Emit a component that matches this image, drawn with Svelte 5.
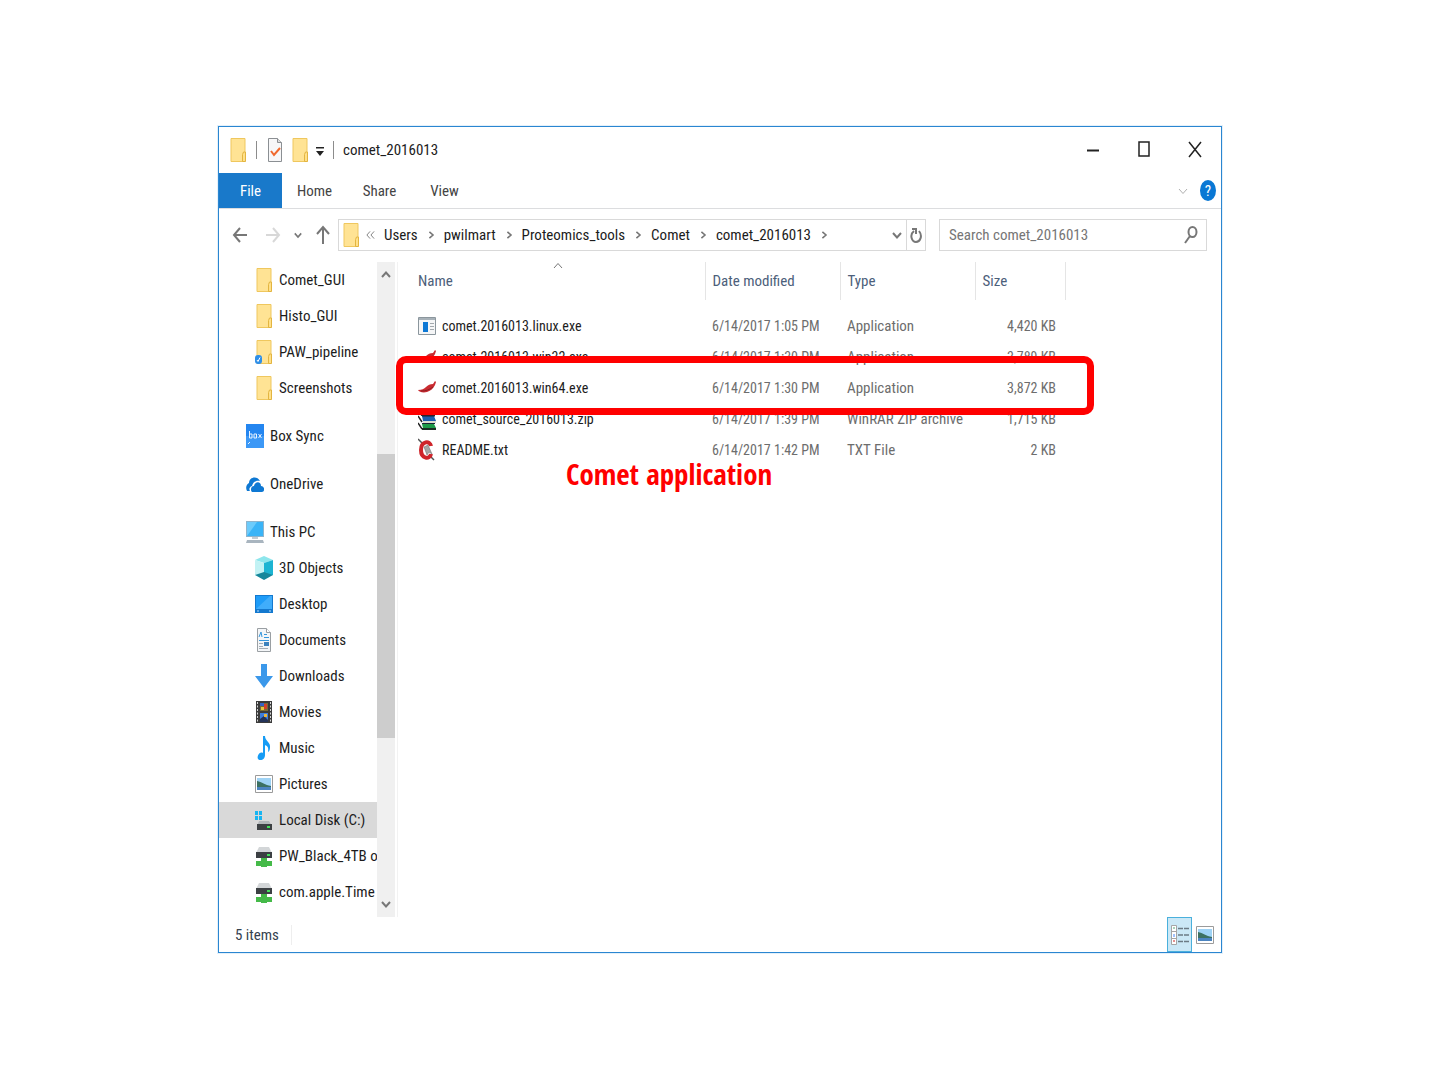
<script>
  const crumbs = ['Users', 'pwilmart', 'Proteomics_tools', 'Comet', 'comet_2016013'];

  const groups = [
    [
      { label: 'Comet_GUI', icon: 'folder', child: true },
      { label: 'Histo_GUI', icon: 'folder', child: true },
      { label: 'PAW_pipeline', icon: 'synced', child: true },
      { label: 'Screenshots', icon: 'folder', child: true }
    ],
    [{ label: 'Box Sync', icon: 'box' }],
    [{ label: 'OneDrive', icon: 'cloud' }],
    [
      { label: 'This PC', icon: 'pc' },
      { label: '3D Objects', icon: 'cube', child: true },
      { label: 'Desktop', icon: 'desktop', child: true },
      { label: 'Documents', icon: 'document', child: true },
      { label: 'Downloads', icon: 'download', child: true },
      { label: 'Movies', icon: 'movie', child: true },
      { label: 'Music', icon: 'music', child: true },
      { label: 'Pictures', icon: 'picture', child: true },
      { label: 'Local Disk (C:)', icon: 'disk', child: true, selected: true },
      { label: 'PW_Black_4TB o', icon: 'netdisk', child: true },
      { label: 'com.apple.Time', icon: 'netdisk', child: true }
    ]
  ];

  const files = [
    { name: 'comet.2016013.linux.exe', icon: 'exe', date: '6/14/2017 1:05 PM', type: 'Application', size: '4,420 KB' },
    { name: 'comet.2016013.win32.exe', icon: 'pepper', date: '6/14/2017 1:30 PM', type: 'Application', size: '3,789 KB' },
    { name: 'comet.2016013.win64.exe', icon: 'pepper', date: '6/14/2017 1:30 PM', type: 'Application', size: '3,872 KB' },
    { name: 'comet_source_2016013.zip', icon: 'rar', date: '6/14/2017 1:39 PM', type: 'WinRAR ZIP archive', size: '1,715 KB' },
    { name: 'README.txt', icon: 'txt', date: '6/14/2017 1:42 PM', type: 'TXT File', size: '2 KB' }
  ];
</script>

{#snippet icon(kind)}
  <svg class="icon" viewBox="0 0 18 24" aria-hidden="true">
    {#if kind === 'folder' || kind === 'synced'}
      <path d="M2 .5h14v23H2z" fill="#ffe394" stroke="#efc75e" />
      <path d="M14.500 14h2v9.500h-3v-7z" fill="#ffe08a" stroke="#e3b540" />
      {#if kind === 'synced'}
        <rect x="0" y="15" width="7" height="9" rx="3" fill="#2f8fe8" />
        <path d="M2 20l1 1.500 2-4" fill="none" stroke="#fff" />
      {/if}
    {:else if kind === 'box'}
      <rect width="18" height="24" fill="#2486f0" />
      <path d="M0 12h18v12H0z" fill="#3c98f6" />
      <path d="M3.500 7v7h2.500v-4H3.500M8 10h2.500v4H8zM12.500 10l3 4m0-4l-3 4M2 20l2-2" fill="none" stroke="#e8f3ff" />
    {:else if kind === 'cloud'}
      <path d="M1 19c-2-4 0-7 2-8 0-6 8-8 11-2-4-1-7 1-8 5-3 1-3 4-2 5z" fill="#0e78d3" />
      <path d="M6 20c-2-2-1-6 2-6 1-5 7-5 7 0 4 0 4 6 1 6z" fill="#0e78d3" />
    {:else if kind === 'pc'}
      <path d="M0 1h18v16H0z" fill="#8fb4cc" />
      <path d="M1 2h16v14H1z" fill="#3ab4f7" />
      <path d="M1 16L11 2H1z" fill="#6ccbfb" />
      <path d="M6 17h6v2H6z" fill="#c3ccd3" />
      <path d="M1 20h16l1 3H0z" fill="#a9b5bf" />
    {:else if kind === 'cube'}
      <path d="M0 4l9-4 9 4-9 3z" fill="#8ee6ec" />
      <path d="M0 4l9 3v13l-9-1z" fill="#c2f2f4" />
      <path d="M9 7l9-3v15l-9 1z" fill="#1cb4d2" />
      <path d="M0 19l9-3 9 3-9 5z" fill="#16879b" />
    {:else if kind === 'desktop'}
      <path d="M0 3h18v18H0z" fill="#1479cf" />
      <path d="M1 4h16v13H1z" fill="#1e9cf8" />
      <path d="M1 17L15 4h2v13z" fill="#40adfb" />
      <path d="M2 19h2m10 0h2" stroke="#b9defa" />
    {:else if kind === 'document'}
      <path d="M2.500 .5h9l4 4v19h-13z" fill="#f4f6f8" stroke="#9a9fa3" />
      <path d="M11.500 .5v4h4" fill="#fff" stroke="#9a9fa3" />
      <path d="M4 9l2-5 1 5M9 6.500h3M9 9.500h5M4 12.500h10" fill="none" stroke="#3596dc" />
      <path d="M4 15.500h4M4 18.500h4M4 20.500h9" stroke="#a4aeb6" />
      <path d="M9 14h5v4H9z" fill="#3c82bd" />
    {:else if kind === 'download'}
      <path d="M6 0h6v12h6l-9 12-9-12h6z" fill="#3b98ea" />
    {:else if kind === 'movie'}
      <path d="M1 1h16v22H1z" fill="#3b3b3b" />
      <path d="M2.500 2v20M15.500 2v20" stroke="#d7d7d7" stroke-dasharray="2 1.500" />
      <path d="M5 3h8v8H5z" fill="#7a6b35" />
      <path d="M5 13h8v9H5z" fill="#3d7ede" />
      <path d="M5 3h4v3H5z" fill="#3663c4" />
      <path d="M9 4h3v5H9z" fill="#d33e2c" />
      <path d="M6 7h3v3H6z" fill="#e4c440" />
      <path d="M5 19l4-3 4 4v2H5z" fill="#24345a" />
      <path d="M9 14h3v3H9z" fill="#e9b53c" />
    {:else if kind === 'music'}
      <path d="M8 0h2c0 5 6 6 5 12 0 3-2 4-2 4 1-5-1-6-3-7v10c0 3-2 5-4.500 5S2 22 3 19.500 6 16 8 17z" fill="#169cf5" />
    {:else if kind === 'picture'}
      <path d="M.5 3.500h17v17H.5z" fill="#fff" stroke="#9b9b9b" />
      <path d="M2 6h14v12H2z" fill="#9fd3f5" />
      <path d="M2 9c5 1 8 4 14 5v2H2z" fill="#3c7162" />
      <path d="M2 15h14v3H2z" fill="#4c84c0" />
    {:else if kind === 'disk'}
      <path d="M0 3h3v4H0zM4 3h3v4H4zM0 8h3v4H0zM4 8h3v4H4z" fill="#18b5f2" />
      <path d="M4 13h10l3 5H2z" fill="#b4b8bb" />
      <path d="M2 16h15v6H2z" fill="#3c4043" />
      <path d="M12 19h3" stroke="#42e05a" stroke-width="2" />
    {:else if kind === 'netdisk'}
      <path d="M4 3h10l3 6H1z" fill="#d3d6d8" />
      <path d="M1 8h16v6H1z" fill="#3c4043" />
      <path d="M12 11h3" stroke="#42e05a" stroke-width="2" />
      <path d="M6 14h6v3h5v5h-5v1H6v-1H1v-5h5z" fill="#45ba49" />
    {:else if kind === 'exe'}
      <path d="M.5 3.500h17v17H.5z" fill="#f5f6f7" stroke="#8b969d" />
      <path d="M1 4h16v2H1z" fill="#a7b1b8" />
      <path d="M5 8h5v10H5z" fill="#0d78d5" />
      <path d="M12 9.500h4M12 12.500h4M12 15.500h4" stroke="#a2a8ad" />
    {:else if kind === 'pepper'}
      <path d="M0 14c4 0 6-1 8-3 2-2 4-3 7-3l2-3 1 1-1 3c-2 4-5 6-8 7-4 1-8 0-9-2z" fill="#c92b30" />
      <path d="M3 15c5 0 8-1 12-4" fill="none" stroke="#8d1c22" />
    {:else if kind === 'rar'}
      <path d="M1 1h14l2 5H3z" fill="#7c2431" />
      <path d="M3 5h14v4H3z" fill="#4b1822" />
      <path d="M4 9h12l2 5H5z" fill="#1c5fae" />
      <path d="M5 14h13v2H5z" fill="#dcdccf" />
      <path d="M4 9h13M4 16.500h13" stroke="#1b2430" />
      <path d="M4 17h12l2 4H5z" fill="#1d9a47" />
      <path d="M4 21h14v2H4z" fill="#1b2d22" />
      <path d="M7 1h4v5H7z" fill="#a8893d" />
      <path d="M0 9l4 6m-4 1l4 6M1 2l2 6" fill="none" stroke="#222" stroke-width="1.500" />
    {:else if kind === 'txt'}
      <path d="M0 1l5 5m7 12l4 4" stroke="#555" stroke-width="1.500" />
      <path d="M13 8c-1-6-10-5-10 4s9 10 10 4" fill="none" stroke="#cf252b" stroke-width="4" />
      <path d="M6 9l4-2 4 9-3-2-2 3z" fill="#a6a6a6" stroke="#666" stroke-width=".5" />
    {/if}
  </svg>
{/snippet}

{#snippet chevron(dir)}
  <svg class="chevron {dir}" viewBox="0 0 10 10" aria-hidden="true"><path d="M1 3l4 4.500 4-4.500" /></svg>
{/snippet}

<main>
  <section class="window" aria-label="comet_2016013">
    <header class="titlebar">
      {@render icon('folder')}
      <span class="rule"></span>
      <button class="plain" aria-label="Properties">
        <svg class="icon" viewBox="0 0 18 24" aria-hidden="true">
          <path d="M2.500 .5h9l4 4v19h-13z" fill="#f7f7f8" stroke="#8b8f93" />
          <path d="M11.500 .5v4h4" fill="#ddd" stroke="#8b8f93" />
          <path d="M5 13l3 4 6-7" fill="none" stroke="#f0692e" stroke-width="2" />
        </svg>
      </button>
      <button class="plain" aria-label="New folder">{@render icon('folder')}</button>
      <button class="plain" aria-label="Customize toolbar">
        <svg class="caret" viewBox="0 0 8 12" aria-hidden="true"><path d="M0 3h8v1.500H0zM0 7h8l-4 5z" fill="#222" /></svg>
      </button>
      <span class="rule"></span>
      <h1>comet_2016013</h1>
      <div class="controls">
        <button aria-label="Minimize"><svg viewBox="0 0 16 20"><path d="M2 10.500h12" stroke-width="2" /></svg></button>
        <button aria-label="Maximize"><svg viewBox="0 0 16 20"><path d="M3 2h10v14H3z" stroke-width="1.500" /></svg></button>
        <button aria-label="Close"><svg viewBox="0 0 16 20"><path d="M2 2l12 15M14 2L2 17" stroke-width="1.500" /></svg></button>
      </div>
    </header>

    <div class="tabs">
      <button class="file">File</button>
      <button>Home</button>
      <button>Share</button>
      <button>View</button>
      <div class="ribbon-tools">
        <button class="plain faint" aria-label="Expand ribbon">{@render chevron('down')}</button>
        <button class="help" aria-label="Help">?</button>
      </div>
    </div>

    <div class="navbar">
      <div class="arrows">
        <button class="plain" aria-label="Back"><svg class="arrow" viewBox="0 0 16 20"><path d="M15 10H2M8 3l-6 7 6 7" /></svg></button>
        <button class="plain off" aria-label="Forward"><svg class="arrow" viewBox="0 0 16 20"><path d="M1 10h13M8 3l6 7-6 7" /></svg></button>
        <button class="plain" aria-label="Recent locations">{@render chevron('small')}</button>
        <button class="plain" aria-label="Up"><svg class="arrow" viewBox="0 0 16 20"><path d="M8 19V3M2 9l6-7 6 7" /></svg></button>
      </div>
      <div class="address">
        {@render icon('folder')}
        <svg class="more" viewBox="0 0 10 10" aria-hidden="true"><path d="M4.500 1L1 5l3.500 4M9 1L5.500 5 9 9" /></svg>
        {#each crumbs as crumb}
          <button class="crumb">{crumb}</button>
          <span class="sep">{@render chevron('right')}</span>
        {/each}
        <button class="plain history" aria-label="Previous locations">{@render chevron('down')}</button>
        <button class="refresh" aria-label="Refresh">
          <svg viewBox="0 0 12 18" aria-hidden="true"><path d="M9 5c4 5 1 11-3 11S-1 9 4 5M2 3h4v5" /></svg>
        </button>
      </div>
      <div class="search">
        <input type="text" aria-label="Search" placeholder="Search comet_2016013" />
        <svg viewBox="0 0 14 20" aria-hidden="true"><ellipse cx="8.500" cy="7" rx="4" ry="5" /><path d="M6 11l-5 7" /></svg>
      </div>
    </div>

    <div class="body">
      <nav class="tree" aria-label="Folders">
        {#each groups as group}
          <ul>
            {#each group as item}
              <li>
                <button class="node" class:child={item.child} class:selected={item.selected}>
                  {@render icon(item.icon)}<span>{item.label}</span>
                </button>
              </li>
            {/each}
          </ul>
        {/each}
      </nav>
      <div class="scrollbar">
        <button class="plain" aria-label="Scroll up">{@render chevron('up')}</button>
        <div class="track"><div class="thumb"></div></div>
        <button class="plain" aria-label="Scroll down">{@render chevron('down')}</button>
      </div>

      <div class="files">
        <span class="sort">{@render chevron('up')}</span>
        <table>
          <colgroup><col class="c-name" /><col class="c-date" /><col class="c-type" /><col class="c-size" /></colgroup>
          <thead>
            <tr><th>Name</th><th>Date modified</th><th>Type</th><th>Size</th></tr>
          </thead>
          <tbody>
            {#each files as file}
              <tr>
                <td><div class="name">{@render icon(file.icon)}<span>{file.name}</span></div></td>
                <td>{file.date}</td>
                <td class="type">{file.type}</td>
                <td>{file.size}</td>
              </tr>
            {/each}
          </tbody>
        </table>
        <div class="highlight"></div>
        <p class="note">Comet application</p>
      </div>
    </div>

    <footer>
      <span class="count">5 items</span>
      <div class="views">
        <button class="view active" aria-label="Details view">
          <svg viewBox="0 0 18 24" aria-hidden="true">
            <path d="M.5 2.500h5v19h-5zM.5 8.500h5M.5 15.500h5" fill="#fff" stroke="#a5a5a5" />
            <path d="M7 5.500h5m1 0h5M7 12h5m1 0h5M7 18.500h5m1 0h5" stroke="#6c7b85" stroke-width="1.500" />
            <path d="M3 4v2" stroke="#5a7" /><path d="M3 11v3" stroke="#48f" /><path d="M3 17v2" stroke="#c22" />
          </svg>
        </button>
        <button class="view" aria-label="Thumbnail view">{@render icon('picture')}</button>
      </div>
    </footer>
  </section>
</main>

<style>
  :global(body) { margin: 0; background: #fff; }
  * { box-sizing: border-box; }
  main {
    padding: 126px 218px;
    font-family: 'Roboto Condensed', 'Open Sans', sans-serif;
    font-size: 15px;
    line-height: 20px;
    color: #1c1c1c;
  }
  button { font: inherit; color: inherit; background: none; border: 0; padding: 0; margin: 0; }
  svg { display: block; fill: none; stroke-width: 1; }
  .icon { width: 18px; height: 24px; flex: none; }
  .plain { display: grid; place-items: center; }
  .window { border: 1px solid #2a86d1; background: #fff; outline: 1px solid #e3f0fa; }

  .titlebar { display: flex; align-items: center; height: 46px; padding-left: 10px; gap: 7px; }
  .rule { width: 1px; height: 18px; margin: 0 2px; background: #8c8c8c; }
  .caret { width: 8px; height: 12px; }
  h1 { margin: 0; font-size: 15px; font-weight: 400; }
  .controls { display: flex; margin-left: auto; padding-right: 1px; }
  .controls button { width: 51px; height: 44px; display: grid; place-items: center; }
  .controls svg { width: 16px; height: 20px; stroke: #222; }

  .tabs { display: flex; height: 36px; border-bottom: 1px solid #dcdddf; color: #444; }
  .tabs > button { width: 65px; }
  .tabs > .file { width: 63px; background: #1979ca; color: #fff; }
  .ribbon-tools { display: flex; align-items: center; gap: 12px; margin-left: auto; padding-right: 5px; }
  .help { width: 16px; height: 21px; border-radius: 50%; background: #0a78d4; color: #fff; }

  .chevron { width: 10px; height: 10px; stroke: #777; stroke-width: 2; }
  .chevron.right { rotate: -90deg; width: 8px; height: 8px; }
  .chevron.small { width: 8px; height: 8px; }
  .chevron.up { rotate: 180deg; }
  .faint .chevron { stroke: #b0b0b0; stroke-width: 1; }

  .navbar { display: flex; align-items: center; gap: 13px; padding: 10px 14px 11px 13px; }
  .arrows { display: flex; align-items: center; gap: 13px; margin-right: -6px; }
  .arrow { width: 16px; height: 20px; stroke: #777; stroke-width: 2; }
  .off { padding-left: 4px; }
  .off .arrow { stroke: #d8d8d8; }
  .address { flex: 1; display: flex; align-items: center; height: 32px; border: 1px solid #d9d9d9; padding-left: 3px; }
  .more { width: 9px; height: 10px; margin: 0 9px 0 6px; stroke: #777; stroke-width: 1; }
  .sep { width: 26px; display: grid; place-items: center; }
  .history { margin-left: auto; padding: 0 4px; }
  .refresh { width: 19px; height: 100%; display: grid; place-items: center; border-left: 1px solid #d9d9d9; }
  .refresh svg { width: 12px; height: 18px; stroke: #777; stroke-width: 2; }
  .search { display: flex; align-items: center; width: 268px; height: 32px; border: 1px solid #d9d9d9; padding: 0 8px 0 9px; }
  .search input { flex: 1; min-width: 0; border: 0; padding: 0; outline: 0; background: none; font: inherit; color: #6f6f6f; }
  .search input::placeholder { color: #767676; opacity: 1; }
  .search svg { width: 14px; height: 20px; stroke: #777; stroke-width: 2; }

  .body { display: flex; }
  .tree { width: 158px; padding-bottom: 7px; overflow: hidden; }
  ul { list-style: none; margin: 0 0 12px; padding: 0; }
  ul:last-child { margin: 0; }
  .node { display: flex; align-items: center; gap: 6px; width: 100%; height: 36px; padding-left: 27px; white-space: nowrap; overflow: hidden; }
  .child { padding-left: 36px; }
  .selected { background: #d9d9d9; }
  .scrollbar { display: flex; flex-direction: column; width: 18px; background: #f0f0f0; }
  .scrollbar button { height: 26px; }
  .track { flex: 1; padding-top: 166px; }
  .thumb { height: 284px; background: #cdcdcd; }

  .files { position: relative; flex: 1; margin-left: 2px; border-left: 1px solid #f2f2f2; }
  .sort { position: absolute; left: 155px; top: -1px; }
  .sort .chevron { stroke-width: 1; }
  table { border-collapse: collapse; table-layout: fixed; width: 667px; }
  .c-name { width: 307px; }
  .c-date, .c-type { width: 135px; }
  .c-size { width: 90px; }
  th { height: 38px; padding: 0 0 0 7px; border-right: 1px solid #e5e5e5; text-align: left; font-weight: 400; color: #4c607a; }
  th:first-child { padding-left: 20px; }
  tbody::before { content: ''; display: table-row; height: 10px; }
  td { height: 31px; padding: 0 0 0 7px; font-size: 14px; white-space: nowrap; color: #6d6d6d; }
  td:first-child { padding-left: 20px; color: #1c1c1c; }
  td:last-child { padding: 0 9px 0 0; text-align: right; }
  .type { font-size: 15px; }
  .name { display: flex; align-items: center; gap: 6px; }
  .highlight { position: absolute; left: -2px; top: 94px; width: 698px; height: 59px; border: 7px solid #f00; border-radius: 10px; }
  .note { position: absolute; left: 168px; top: 197px; margin: 0; font-family: 'Open Sans Condensed', 'Open Sans', sans-serif; font-size: 29px; line-height: 30px; font-weight: 700; color: #f00; white-space: nowrap; }

  footer { display: flex; align-items: center; justify-content: space-between; height: 35px; padding-left: 16px; color: #35424f; }
  .count { padding-right: 12px; border-right: 1px solid #eee; }
  .views { display: flex; height: 100%; padding-right: 4px; }
  .view { width: 25px; display: grid; place-items: center; }
  .view svg { width: 18px; height: 24px; }
  .active { background: #cbe8f6; border: 1px solid #4ab0dc; }
</style>
